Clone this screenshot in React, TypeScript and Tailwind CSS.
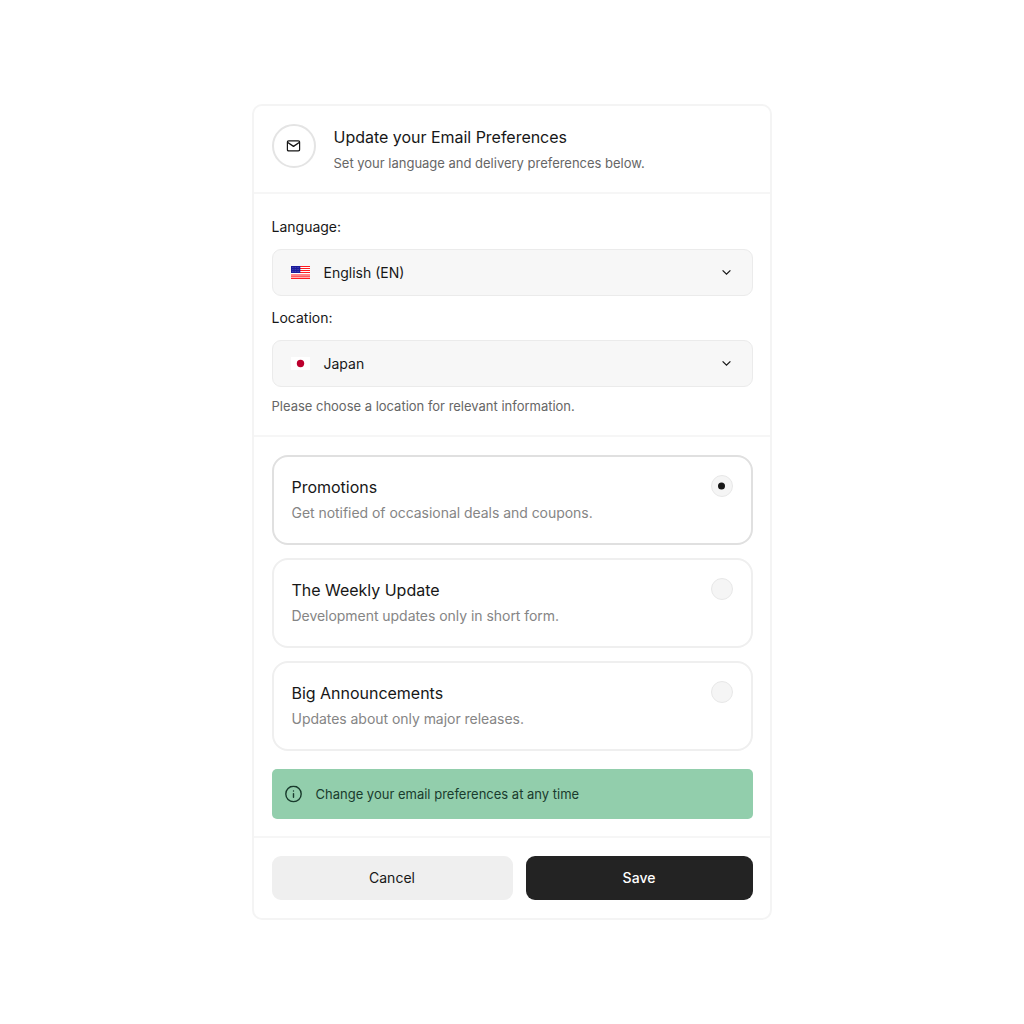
import React, { useState } from "react";

function MailIcon() {
  return (
    <svg width="14" height="12" viewBox="0 0 14 12" fill="none" stroke="currentColor" strokeWidth="1.4" strokeLinecap="round" strokeLinejoin="round" className="-translate-x-[0.5px]">
      <rect x="0.8" y="0.9" width="12.4" height="10" rx="1.4" />
      <path d="M1.3 2.5L7 6.3L12.7 2.5" />
    </svg>
  );
}

function Chevron() {
  return (
    <svg width="9" height="6" viewBox="0 0 9 6" fill="none" stroke="#171717" strokeWidth="1.3" className="-translate-y-[0.5px]">
      <path d="M0.6 0.9L4.5 4.6L8.4 0.9" />
    </svg>
  );
}

function InfoIcon() {
  return (
    <svg width="17" height="17" viewBox="0 0 17 17" fill="none" stroke="currentColor" strokeWidth="1.4" strokeLinecap="round" className="-translate-y-[0.5px]">
      <circle cx="8.5" cy="8.5" r="7.7" />
      <path d="M8.5 8.1v3.6M8.5 5.4v.1" />
    </svg>
  );
}

function UsFlag() {
  return (
    <svg width="19" height="13" viewBox="0 0 19 13">
      <rect width="19" height="13" fill="#fff" />
      {[0, 2, 4, 6].map((y) => (
        <rect key={y} y={y} width="19" height="1" fill="#ff1a1f" />
      ))}
      <rect y="8" width="19" height="2" fill="#ff8587" />
      <rect y="10" width="19" height="1" fill="#ff5a5e" />
      <rect y="11" width="19" height="1" fill="#ffb4b5" />
      <rect y="12" width="19" height="1" fill="#ff1a1f" />
      <rect width="9.3" height="7" fill="#1a1a9c" />
      {[1.5, 3.5, 5.5].map((y) => (
        <path key={y} d={`M1 ${y}h7.6`} stroke="#7474c4" strokeWidth=".6" strokeDasharray=".7 .9" />
      ))}
    </svg>
  );
}

function JapanFlag() {
  return (
    <svg width="19" height="13" viewBox="0 0 19 13">
      <rect width="19" height="13" fill="#fff" />
      <circle cx="9.5" cy="6.5" r="3.7" fill="#bc002d" />
    </svg>
  );
}

function SelectField({ label, value, flag }: { label: string; value: string; flag: React.ReactNode }) {
  return (
    <div>
      <div className="h-[22px] text-[14px] leading-[22px]">{label}</div>
      <button className="mt-[11px] flex h-[47px] w-full items-center rounded-[9px] border border-[#ebebeb] bg-[#f7f7f7] pr-[20.5px] pl-[18.5px] text-left">
        {flag}
        <span className="ml-[13.5px] flex-1 pt-px text-[14px] leading-5">{value}</span>
        <Chevron />
      </button>
    </div>
  );
}

const options = [
  { title: "Promotions", text: "Get notified of occasional deals and coupons." },
  { title: "The Weekly Update", text: "Development updates only in short form." },
  { title: "Big Announcements", text: "Updates about only major releases." },
];

export default function App() {
  const [selected, setSelected] = useState(0);
  return (
    <main className="flex h-screen w-full items-center justify-center bg-white font-['Inter',sans-serif] text-[#171717] antialiased">
      <div className="flex h-[816px] w-[520px] flex-col rounded-[10px] border-2 border-[#f4f4f4] bg-white">
        <header className="flex h-[88px] border-b-2 border-[#f6f6f6] pt-[18px] pl-[17.5px]">
          <div className="flex size-[44px] items-center justify-center rounded-full border-2 border-[#e4e4e4]">
            <MailIcon />
          </div>
          <div className="ml-[18px]">
            <h1 className="text-[16px] leading-[26px] tracking-[-0.02px]">Update your Email Preferences</h1>
            <p className="text-[13px] leading-[26px] tracking-[-0.01px] text-[#666]">Set your language and delivery preferences below.</p>
          </div>
        </header>
        <section className="flex h-[243px] flex-col gap-[11px] border-b-2 border-[#f6f6f6] px-[17.5px] pt-[22px]">
          <SelectField label="Language:" value="English (EN)" flag={<UsFlag />} />
          <SelectField label="Location:" value="Japan" flag={<JapanFlag />} />
          <p className="text-[13px] leading-[16px] tracking-[-0.01px] text-[#666]">Please choose a location for relevant information.</p>
        </section>
        <section className="flex h-[401px] flex-col border-b-2 border-[#f6f6f6] px-[17.5px] pt-[18px]">
          <div className="flex flex-col gap-[13px]">
            {options.map((o, i) => (
              <button
                key={o.title}
                onClick={() => setSelected(i)}
                className={`flex h-[90px] items-start justify-between rounded-[16px] border-2 pt-[17px] pr-[18px] pl-[18px] text-left ${
                  i === selected ? "border-[#e0e0e0]" : "border-[#efefef]"
                }`}
              >
                <span>
                  <span className="block text-[16px] leading-[26px] tracking-[-0.02px]">{o.title}</span>
                  <span className="block text-[14px] leading-[26px] tracking-[-0.04px] text-[#858585]">{o.text}</span>
                </span>
                <span className="mt-px flex size-[22px] items-center justify-center rounded-full border border-[#e8e8e8] bg-[#f5f5f5]">
                  {i === selected && <span className="size-[7px] -translate-y-[0.5px] rounded-full bg-[#171717]" />}
                </span>
              </button>
            ))}
          </div>
          <div className="mt-[18px] flex h-[50px] items-center rounded-[5px] bg-[#92ceac] pl-[13.5px] text-[#193b2d]">
            <InfoIcon />
            <span className="ml-[13.5px] text-[13px] leading-5">Change your email preferences at any time</span>
          </div>
        </section>
        <footer className="flex gap-[13px] px-[17.5px] pt-[18px]">
          <button className="h-[44px] w-[241px] rounded-[9px] bg-[#efefef] pb-px text-[14px]">Cancel</button>
          <button className="h-[44px] flex-1 rounded-[9px] bg-[#232323] pb-px text-[14px] font-medium text-white">Save</button>
        </footer>
      </div>
    </main>
  );
}
